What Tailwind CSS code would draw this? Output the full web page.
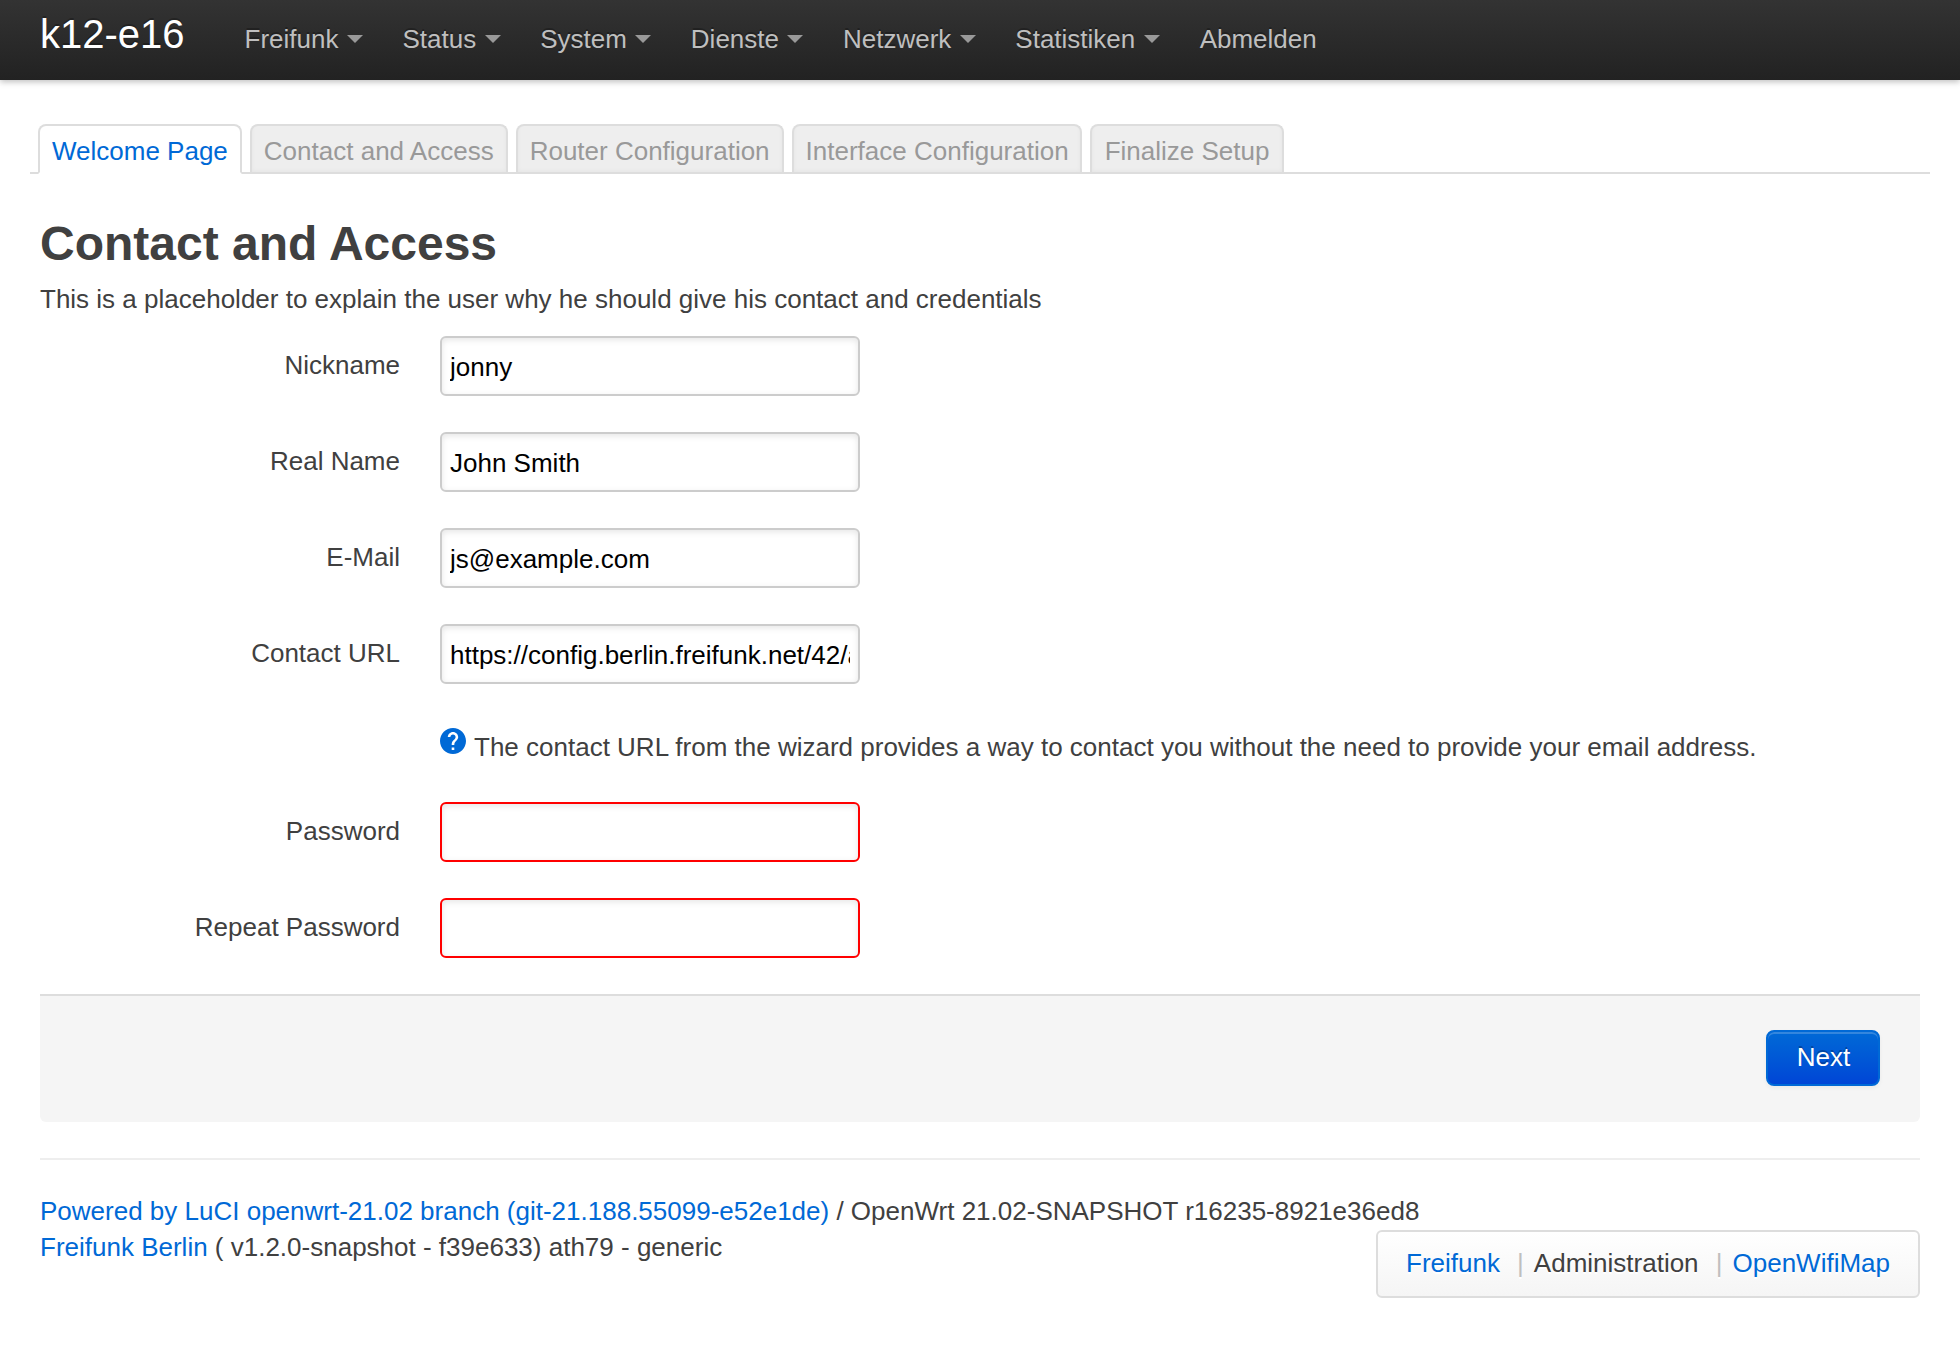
<!DOCTYPE html>
<html lang="de">
<head>
<meta charset="utf-8">
<title>k12-e16 - LuCI</title>
<script src="https://cdn.jsdelivr.net/npm/@tailwindcss/browser@4"></script>
</head>
<body class="bg-white font-['Liberation_Sans',Arial,sans-serif] text-[26px] leading-9 text-[#404040]">
<header class="flex h-20 items-center bg-linear-to-b from-[#333] to-[#222] px-10 text-[#bfbfbf] shadow-[0_2px_6px_rgba(0,0,0,0.25)] [text-shadow:0_-2px_0_rgba(0,0,0,0.25)]">
  <a class="mr-[60px] pb-3 text-[40px] leading-10 text-white">k12-e16</a>
  <nav class="flex gap-[39.600px] pb-0.5">
    <a class="flex items-center gap-[8.400px]">Freifunk<i class="size-0 border-x-8 border-t-8 border-x-transparent border-t-[#999]"></i></a>
    <a class="flex items-center gap-[8.400px]">Status<i class="size-0 border-x-8 border-t-8 border-x-transparent border-t-[#999]"></i></a>
    <a class="flex items-center gap-[8.400px]">System<i class="size-0 border-x-8 border-t-8 border-x-transparent border-t-[#999]"></i></a>
    <a class="flex items-center gap-[8.400px]">Dienste<i class="size-0 border-x-8 border-t-8 border-x-transparent border-t-[#999]"></i></a>
    <a class="flex items-center gap-[8.400px]">Netzwerk<i class="size-0 border-x-8 border-t-8 border-x-transparent border-t-[#999]"></i></a>
    <a class="flex items-center gap-[8.400px]">Statistiken<i class="size-0 border-x-8 border-t-8 border-x-transparent border-t-[#999]"></i></a>
    <a class="pl-[0.400px]">Abmelden</a>
  </nav>
</header>

<ul class="mx-[30px] mt-11 flex h-[50px] gap-2 border-b-2 border-[#ddd] px-2 leading-[50px] text-[#999]">
  <li class="h-[50px] rounded-t-lg border-2 border-[#ddd] border-b-white bg-white px-3 text-[#0069d6]">Welcome Page</li>
  <li class="h-[50px] rounded-t-lg border-2 border-b-0 border-[#ddd] bg-[#eee] px-3 shadow-[inset_0_-2px_0_#ddd,inset_0_-3px_4px_rgba(0,0,0,0.04)]">Contact and Access</li>
  <li class="h-[50px] rounded-t-lg border-2 border-b-0 border-[#ddd] bg-[#eee] px-3 shadow-[inset_0_-2px_0_#ddd,inset_0_-3px_4px_rgba(0,0,0,0.04)]">Router Configuration</li>
  <li class="h-[50px] rounded-t-lg border-2 border-b-0 border-[#ddd] bg-[#eee] pr-[11px] pl-3 shadow-[inset_0_-2px_0_#ddd,inset_0_-3px_4px_rgba(0,0,0,0.04)]">Interface Configuration</li>
  <li class="h-[50px] rounded-t-lg border-2 border-b-0 border-[#ddd] bg-[#eee] px-[13px] shadow-[inset_0_-2px_0_#ddd,inset_0_-3px_4px_rgba(0,0,0,0.04)]">Finalize Setup</li>
</ul>

<main class="px-10">
  <h2 class="pt-[34px] text-5xl leading-[72px] font-bold">Contact and Access</h2>
  <p class="pt-px">This is a placeholder to explain the user why he should give his contact and credentials</p>

  <form class="mt-[19px]">
    <div class="flex h-24 gap-10">
      <label class="w-[360px] pt-[11px] text-right">Nickname</label>
      <input type="text" value="jonny" class="h-[60px] w-[420px] rounded-md border-2 border-[#ccc] px-2 pt-0.5 text-black shadow-[inset_0_2px_6px_rgba(0,0,0,0.1)]">
    </div>
    <div class="flex h-24 gap-10">
      <label class="w-[360px] pt-[11px] text-right">Real Name</label>
      <input type="text" value="John Smith" class="h-[60px] w-[420px] rounded-md border-2 border-[#ccc] px-2 pt-0.5 text-black shadow-[inset_0_2px_6px_rgba(0,0,0,0.1)]">
    </div>
    <div class="flex h-24 gap-10">
      <label class="w-[360px] pt-[11px] text-right">E-Mail</label>
      <input type="text" value="js@example.com" class="h-[60px] w-[420px] rounded-md border-2 border-[#ccc] px-2 pt-0.5 text-black shadow-[inset_0_2px_6px_rgba(0,0,0,0.1)]">
    </div>
    <div class="flex h-[178px] gap-10">
      <label class="w-[360px] pt-[11px] text-right">Contact URL</label>
      <div>
        <input type="text" value="https://config.berlin.freifunk.net/42/a" class="block h-[60px] w-[420px] rounded-md border-2 border-[#ccc] px-2 pt-0.5 text-black shadow-[inset_0_2px_6px_rgba(0,0,0,0.1)]">
        <div class="mt-11 flex gap-2">
          <svg class="size-[26px]" viewBox="2 2 20 20" fill="#0069d6"><path d="M12 2C6.480 2 2 6.480 2 12s4.480 10 10 10 10-4.480 10-10S17.520 2 12 2zm1 17h-2v-2h2v2zm2.070-7.750l-.9.920C13.450 12.900 13 13.500 13 15h-2v-.5c0-1.100.450-2.100 1.170-2.830l1.240-1.260c.370-.360.590-.860.590-1.410 0-1.100-.9-2-2-2s-2 .9-2 2H8c0-2.210 1.790-4 4-4s4 1.790 4 4c0 .880-.360 1.680-.930 2.250z"/></svg>
          <span class="pt-px">The contact URL from the wizard provides a way to contact you without the need to provide your email address.</span>
        </div>
      </div>
    </div>
    <div class="flex h-24 gap-10">
      <label class="w-[360px] pt-[11px] text-right">Password</label>
      <input type="password" class="h-[60px] w-[420px] rounded-md border-2 border-[red] px-2 shadow-[inset_0_2px_6px_rgba(0,0,0,0.1)]">
    </div>
    <div class="flex h-24 gap-10">
      <label class="w-[360px] pt-[11px] text-right">Repeat Password</label>
      <input type="password" class="h-[60px] w-[420px] rounded-md border-2 border-[red] px-2 shadow-[inset_0_2px_6px_rgba(0,0,0,0.1)]">
    </div>
    <div class="flex h-32 justify-end rounded-b-md border-t-2 border-[#ddd] bg-[#f5f5f5] px-10 pt-[34px]">
      <button type="button" class="h-14 w-[114px] rounded-lg border-2 border-[#0069d6] bg-linear-to-b from-[#0069d6] to-[#0045d6] pb-0.5 pl-px text-white shadow-[inset_0_2px_0_rgba(255,255,255,0.2),0_2px_4px_rgba(0,0,0,0.05)] [text-shadow:0_-2px_0_rgba(0,0,0,0.25)]">Next</button>
    </div>
  </form>

  <footer class="mt-9 border-t-2 border-[#eee] pt-[33px]">
    <div><a class="text-[#0069d6]">Powered by LuCI openwrt-21.02 branch (git-21.188.55099-e52e1de)</a> / OpenWrt 21.02-SNAPSHOT r16235-8921e36ed8</div>
    <div class="flex items-start justify-between">
      <div><a class="text-[#0069d6]">Freifunk Berlin</a> ( v1.2.0-snapshot - f39e633) ath79 - generic</div>
      <ul class="mt-px flex h-[68px] w-[544px] justify-between rounded-md border-2 border-[#ddd] bg-linear-to-b from-white to-[#f5f5f5] px-7 pt-[13px] shadow-[inset_0_2px_0_#fff] [text-shadow:0_2px_0_#fff]">
        <li class="text-[#0069d6]">Freifunk</li>
        <li><span class="pr-2.5 text-[#bfbfbf]">|</span>Administration</li>
        <li><span class="pr-2.5 text-[#bfbfbf]">|</span><a class="text-[#0069d6]">OpenWifiMap</a></li>
      </ul>
    </div>
  </footer>
</main>
</body>
</html>
